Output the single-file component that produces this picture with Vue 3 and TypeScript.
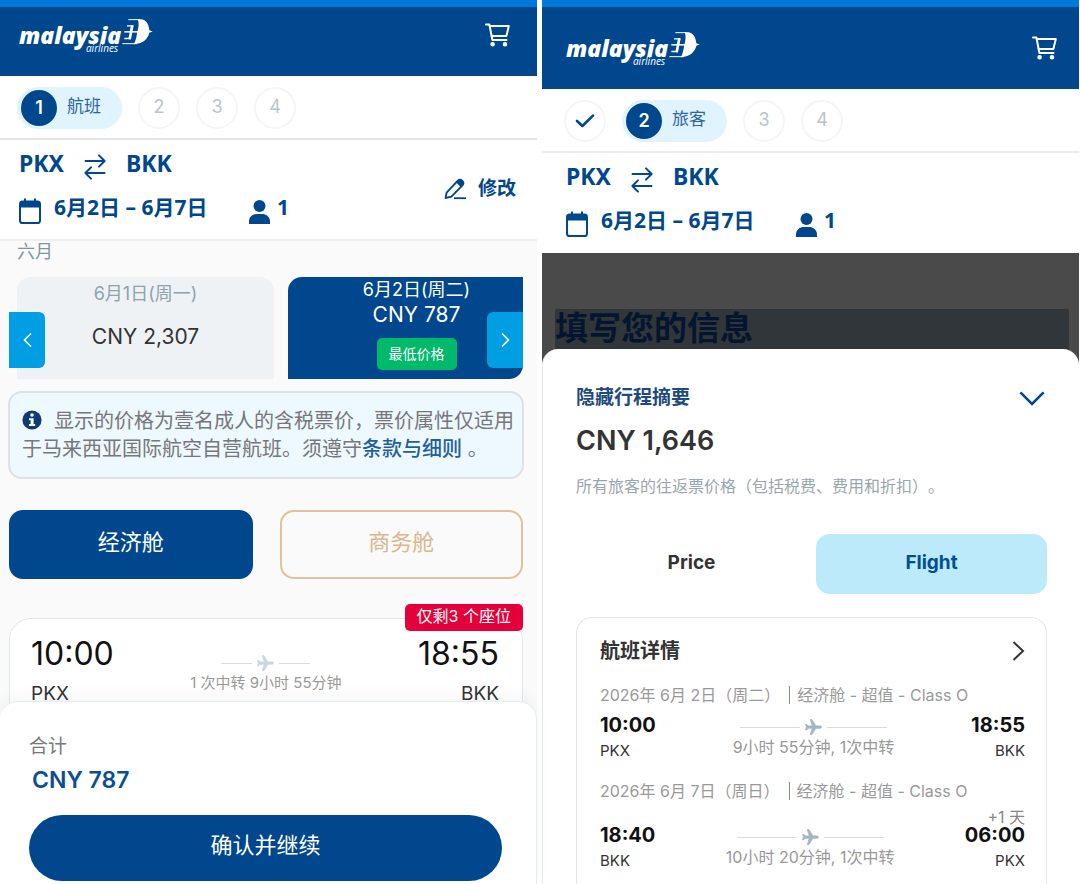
<script setup lang="ts">
import { ref } from 'vue'

interface Step {
  label: string
  state: 'done' | 'current' | 'todo'
  title?: string
}

interface Screen {
  id: 'select' | 'passenger'
  steps: Step[]
}

interface Leg {
  date: string
  cabin: string
  depart: string
  from: string
  arrive: string
  to: string
  duration: string
  extra?: string
}

const screens: Screen[] = [
  {
    id: 'select',
    steps: [
      { label: '1', state: 'current', title: '航班' },
      { label: '2', state: 'todo' },
      { label: '3', state: 'todo' },
      { label: '4', state: 'todo' },
    ],
  },
  {
    id: 'passenger',
    steps: [
      { label: '1', state: 'done' },
      { label: '2', state: 'current', title: '旅客' },
      { label: '3', state: 'todo' },
      { label: '4', state: 'todo' },
    ],
  },
]

const legs: Leg[] = [
  {
    date: '2026年 6月 2日（周二）',
    cabin: '经济舱 - 超值 - Class O',
    depart: '10:00',
    from: 'PKX',
    arrive: '18:55',
    to: 'BKK',
    duration: '9小时 55分钟, 1次中转',
  },
  {
    date: '2026年 6月 7日（周日）',
    cabin: '经济舱 - 超值 - Class O',
    depart: '18:40',
    from: 'BKK',
    arrive: '06:00',
    to: 'PKX',
    duration: '10小时 20分钟, 1次中转',
    extra: '+1 天',
  },
]

const cabin = ref<'economy' | 'business'>('economy')
const tab = ref<'price' | 'flight'>('flight')
</script>

<template>
  <main class="page">
    <section v-for="s in screens" :key="s.id" class="screen" :class="s.id">
      <header class="top">
        <a class="logo" href="#" aria-label="malaysia airlines">
          <span class="words">
            <span class="word-main">malaysia</span>
            <span class="word-sub">airlines</span>
          </span>
          <svg class="kite" viewBox="24 16 96 80" aria-hidden="true">
            <path d="M74 19 H86 C100 21 107 34 109 52 L119 56 L109 60 C104 80 88 94 62 94 C68 86 70 74 72 62 C75 48 80 32 74 19 Z" fill="#fff" />
            <g fill="none" stroke="#fff">
              <path d="M46 20.500 H80" stroke-width="3" />
              <path d="M28 92.500 H72" stroke-width="3" />
              <path d="M58 37 L50 79" stroke-width="8" />
              <path d="M42 39 H61 M34 77 H53" stroke-width="4" />
              <path d="M34 57 H76" stroke-width="4.500" />
            </g>
          </svg>
        </a>
        <button class="icon-btn" type="button" aria-label="购物车">
          <svg viewBox="0 0 25 24" width="25" height="24" fill="none" stroke="#fff" stroke-width="2" stroke-linejoin="round" stroke-linecap="round">
            <path d="M1 1.500 H4.400 L7.400 17 H21.500" />
            <path d="M4.800 3 H23.800 L21.400 13 H6.600" />
            <circle cx="7.600" cy="21.200" r="1.300" fill="#fff" />
            <circle cx="20" cy="21.200" r="1.300" fill="#fff" />
          </svg>
        </button>
      </header>

      <ol class="steps">
        <li v-for="st in s.steps" :key="st.label" class="step" :class="st.state">
          <svg v-if="st.state === 'done'" viewBox="0 0 20 16" width="20" height="16" fill="none" stroke="#00478d" stroke-width="2.6" stroke-linecap="round" stroke-linejoin="round">
            <path d="M2 8 L7.4 13 L18 2.6" />
          </svg>
          <template v-else-if="st.state === 'current'">
            <span class="dot">{{ st.label }}</span>
            <span class="step-title">{{ st.title }}</span>
          </template>
          <span v-else>{{ st.label }}</span>
        </li>
      </ol>

      <div class="trip">
        <div class="trip-info">
          <div class="route-line">
            <span>PKX</span>
            <svg viewBox="0 0 22 26" width="22" height="26" fill="none" stroke="#00478d" stroke-width="2" stroke-linecap="round" stroke-linejoin="round">
              <path d="M1.5 7 H20.5 M15 1.4 L20.6 7 L15 12.6" />
              <path d="M20.5 19 H1.5 M7 13.4 L1.4 19 L7 24.6" />
            </svg>
            <span>BKK</span>
          </div>
          <div class="date-line">
            <svg viewBox="0 0 22 26" width="22" height="26" fill="none">
              <rect x="1" y="3.6" width="20" height="21.4" rx="2.6" stroke="#00478d" stroke-width="2" />
              <path d="M1 9.6 V5.6 Q1 3.6 3 3.6 H19 Q21 3.6 21 5.6 V9.6 Z" fill="#00478d" />
              <path d="M6 0.6 V5 M16 0.6 V5" stroke="#00478d" stroke-width="2" />
            </svg>
            <span class="dates">6月2日 – 6月7日</span>
            <svg viewBox="0 0 21 24" width="21" height="24" fill="#00478d">
              <circle cx="10.5" cy="6" r="6" />
              <path d="M0 24 V21.6 C0 16.6 4 14 8 14 H13 C17 14 21 16.6 21 21.6 V24 Z" />
            </svg>
            <span class="pax">1</span>
          </div>
        </div>
        <button v-if="s.id === 'select'" class="edit" type="button">
          <svg viewBox="0 0 23 22" width="23" height="22">
            <path d="M1.6 20 L2.6 14.6 L13.6 2.9 Q16 0.8 18.4 2.9 Q20.4 5 18.4 7.4 L7.4 18.6 Z" fill="none" stroke="#00478d" stroke-width="1.9" stroke-linejoin="round" />
            <path d="M12 4.6 L13.6 2.9 Q16 0.8 18.4 2.9 Q20.4 5 18.4 7.4 L16.8 9 Z" fill="#00478d" />
            <path d="M10 20.2 H22" stroke="#00478d" stroke-width="1.8" />
          </svg>
          <span>修改</span>
        </button>
      </div>

      <template v-if="s.id === 'select'">
        <div class="body">
          <div class="month">六月</div>
          <div class="carousel">
            <div class="viewport">
              <div class="day">
                <span class="day-date">6月1日(周一)</span>
                <span class="day-price">CNY 2,307</span>
              </div>
              <div class="day active">
                <span class="day-date">6月2日(周二)</span>
                <span class="day-price">CNY 787</span>
                <span class="lowest">最低价格</span>
              </div>
            </div>
            <button class="nav prev" type="button" aria-label="上一个">
              <svg viewBox="0 0 9 16" width="9" height="16" fill="none" stroke="#fff" stroke-width="1.6"><path d="M8 1.5 L1.5 8 L8 14.5" /></svg>
            </button>
            <button class="nav next" type="button" aria-label="下一个">
              <svg viewBox="0 0 9 16" width="9" height="16" fill="none" stroke="#fff" stroke-width="1.6"><path d="M1 1.5 L7.5 8 L1 14.5" /></svg>
            </button>
          </div>

          <p class="notice">
            <svg class="info" viewBox="0 0 20 20" width="20" height="20">
              <circle cx="10" cy="10" r="9.6" fill="#0f3a72" />
              <circle cx="10" cy="5" r="1.8" fill="#fff" />
              <path d="M7 8.2 H11.6 V14 H13.2 V16 H7 V14 H8.6 V10.2 H7 Z" fill="#fff" />
            </svg>显示的价格为壹名成人的含税票价，票价属性仅适用于马来西亚国际航空自营航班。须遵守<a href="#">条款与细则</a> 。
          </p>

          <div class="cabins">
            <button type="button" :class="{ on: cabin === 'economy' }" @click="cabin = 'economy'">经济舱</button>
            <button type="button" :class="{ on: cabin === 'business' }" @click="cabin = 'business'">商务舱</button>
          </div>

          <article class="flight">
            <span class="seats">仅剩3 个座位</span>
            <div class="end">
              <span class="big">10:00</span>
              <span class="port">PKX</span>
            </div>
            <div class="via">
              <div class="track short">
                <i></i>
                <svg viewBox="0 0 24 24" width="19" height="19" fill="#c9d6de" stroke="#c9d6de" stroke-width="1"><path transform="rotate(90 12 12)" d="M21 16v-2l-8-5V3.5c0-.83-.67-1.5-1.5-1.5S10 2.67 10 3.500V9l-8 5v2l8-2.500V19l-2 1.500V22l3.500-1 3.500 1v-1.500L13 19v-5.500l8 2.500z" /></svg>
                <i></i>
              </div>
              <span>1 次中转 9小时 55分钟</span>
            </div>
            <div class="end right">
              <span class="big">18:55</span>
              <span class="port">BKK</span>
            </div>
          </article>
        </div>

        <footer class="total">
          <span class="total-label">合计</span>
          <strong class="total-price">CNY 787</strong>
          <button class="confirm" type="button">确认并继续</button>
        </footer>
      </template>

      <template v-else>
        <div class="shade">
          <h1>填写您的信息</h1>
        </div>
        <div class="summary">
          <button class="toggle" type="button">
            <span>隐藏行程摘要</span>
            <svg viewBox="0 0 26 15" width="26" height="15" fill="none" stroke="#00478d" stroke-width="2.6"><path d="M1.400 1.400 L13 13 L24.600 1.400" /></svg>
          </button>
          <strong class="amount">CNY 1,646</strong>
          <p class="fine">所有旅客的往返票价格（包括税费、费用和折扣）。</p>
          <div class="tabs" role="tablist">
            <button type="button" role="tab" :class="{ on: tab === 'price' }" @click="tab = 'price'">Price</button>
            <button type="button" role="tab" :class="{ on: tab === 'flight' }" @click="tab = 'flight'">Flight</button>
          </div>
          <section class="details">
            <button class="details-head" type="button">
              <span>航班详情</span>
              <svg viewBox="0 0 13 20" width="13" height="20" fill="none" stroke="#333" stroke-width="2"><path d="M1.500 1 L11 10 L1.500 19" /></svg>
            </button>
            <div v-for="leg in legs" :key="leg.date" class="leg">
              <div class="leg-date"><span>{{ leg.date }}</span><span class="bar"></span><span>{{ leg.cabin }}</span></div>
              <div class="leg-row">
                <div class="leg-end">
                  <b>{{ leg.depart }}</b>
                  <span>{{ leg.from }}</span>
                </div>
                <div class="via">
                  <div class="track">
                    <i></i>
                    <svg viewBox="0 0 24 24" width="19" height="19" fill="#a3b5c0" stroke="#a3b5c0" stroke-width="1"><path transform="rotate(90 12 12)" d="M21 16v-2l-8-5V3.5c0-.83-.67-1.5-1.5-1.5S10 2.67 10 3.500V9l-8 5v2l8-2.500V19l-2 1.500V22l3.500-1 3.500 1v-1.500L13 19v-5.500l8 2.500z" /></svg>
                    <i></i>
                  </div>
                  <span>{{ leg.duration }}</span>
                </div>
                <div class="leg-end right">
                  <small v-if="leg.extra">{{ leg.extra }}</small>
                  <b>{{ leg.arrive }}</b>
                  <span>{{ leg.to }}</span>
                </div>
              </div>
            </div>
          </section>
        </div>
      </template>
    </section>
  </main>
</template>

<style>
body {
  margin: 0;
  background: #fff;
}
</style>

<style scoped>
* {
  box-sizing: border-box;
}
.page {
  --navy: #00478d;
  display: grid;
  grid-template-columns: 1fr 1fr;
  gap: 5px;
  min-height: 100vh;
  padding-right: 1px;
  font-family: Inter, "Noto Sans CJK SC", sans-serif;
  color: #333;
}
button {
  margin: 0;
  padding: 0;
  border: 0;
  background: none;
  font: inherit;
  color: inherit;
  cursor: pointer;
}
svg {
  display: block;
  flex: none;
}
.screen {
  --pad: 19px;
  display: flex;
  flex-direction: column;
  min-width: 0;
  border-top: 7px solid #0078dc;
  background: #fff;
}
.passenger {
  --pad: 24px;
}
.top {
  display: flex;
  align-items: flex-start;
  justify-content: space-between;
  padding: 11px 27px 23px var(--pad);
  background: var(--navy);
}
.passenger .top {
  padding: 24px 22px 23px var(--pad);
}
.icon-btn {
  margin-top: 5px;
}
.logo {
  display: flex;
  align-items: flex-start;
  height: 35px;
  color: #fff;
  text-decoration: none;
  font-family: "Open Sans", "Noto Sans", sans-serif;
  font-style: italic;
}
.words {
  display: flex;
  flex-direction: column;
  align-items: flex-end;
}
.word-main {
  font-size: 23px;
  font-weight: 800;
  line-height: 34px;
  height: 25px;
}
.word-sub {
  font-size: 10px;
  line-height: 10px;
  padding-right: 3px;
}
.kite {
  width: 32px;
  height: 27px;
}
.steps {
  display: flex;
  align-items: center;
  gap: 16px;
  margin: 0;
  padding: 11px 17px 9px;
  border-bottom: 2px solid #e2e6e9;
  list-style: none;
  font-size: 18px;
}
.passenger .steps {
  padding-left: 22px;
  border-color: #ececec;
}
.step {
  display: flex;
  align-items: center;
  justify-content: center;
  width: 42px;
  height: 42px;
  border: 2px solid #f3f5f6;
  border-radius: 50%;
  color: #b7c4cc;
  line-height: 24px;
  padding-bottom: 3px;
}
.step.done {
  padding-bottom: 0;
}
.step.current {
  justify-content: flex-start;
  gap: 10px;
  width: 105px;
  border: 0;
  border-radius: 21px;
  padding: 0 0 0 4px;
  background: #dff4fe;
}
.dot {
  display: flex;
  align-items: center;
  justify-content: center;
  width: 36px;
  height: 36px;
  border-radius: 50%;
  background: var(--navy);
  color: #fff;
  font-weight: 600;
}
.step-title {
  color: #2f659d;
  font-size: 17px;
  padding-bottom: 5px;
}
.trip {
  display: flex;
  align-items: center;
  justify-content: space-between;
  padding: 10px 21px 15px var(--pad);
  border-bottom: 2px solid #efefef;
  color: var(--navy);
  font-family: "Noto Sans", "Noto Sans CJK SC", sans-serif;
  font-weight: 700;
}
.passenger .trip {
  padding-bottom: 16px;
  border-bottom: 0;
}
.trip-info {
  display: flex;
  flex-direction: column;
  gap: 12px;
}
.route-line {
  display: flex;
  align-items: flex-start;
  gap: 20px;
  height: 30px;
  font-size: 23px;
  line-height: 26px;
}
.route-line svg {
  align-self: flex-end;
}
.date-line {
  display: flex;
  align-items: flex-end;
  height: 32px;
  font-size: 21px;
}
.date-line span {
  align-self: flex-start;
  line-height: 30px;
}
.dates {
  width: 154px;
  margin: 0 41px 0 13px;
  white-space: nowrap;
}
.pax {
  margin-left: 7px;
}
.edit {
  display: flex;
  align-items: center;
  gap: 11px;
  font-size: 19px;
  font-weight: 700;
}
.edit svg {
  margin-top: 4px;
}
.body {
  padding: 0 14px 0 9px;
  background: #fafafa;
}
.month {
  padding-left: 8px;
  color: #8296a1;
  font-size: 18px;
  line-height: 22px;
}
.carousel {
  position: relative;
  margin-top: 14px;
  padding-left: 8px;
}
.viewport {
  display: flex;
  gap: 14px;
  height: 102px;
  overflow: hidden;
  border-bottom-right-radius: 14px;
}
.day {
  flex: 0 0 calc(50% + 4px);
  display: flex;
  flex-direction: column;
  align-items: center;
  gap: 16px;
  padding-top: 3px;
  border-radius: 14px 14px 0 0;
  background: #eef2f5;
  font-size: 21px;
}
.day-date {
  color: #8fa2ad;
  font-size: 18px;
  line-height: 28px;
}
.day-price {
  line-height: 26px;
}
.day.active {
  gap: 0;
  padding-top: 1px;
  border-radius: 14px 0 0 0;
  background: var(--navy);
  color: #fff;
}
.day.active .day-date {
  color: #fff;
  line-height: 24px;
}
.lowest {
  margin-top: 10px;
  padding: 0 12px;
  border-radius: 5px;
  background: #00b96b;
  font-size: 14px;
  line-height: 32px;
}
.nav {
  position: absolute;
  top: 35px;
  display: flex;
  align-items: center;
  justify-content: center;
  width: 36px;
  height: 56px;
  background: #009fe3;
}
.prev {
  left: 0;
  border-radius: 0 6px 6px 0;
}
.next {
  right: 0;
  border-radius: 6px 0 0 6px;
}
.notice {
  margin: 12px -1px 0;
  padding: 14px 3px 14px 12px;
  border: 2px solid #dee1e4;
  border-radius: 14px;
  background: #edf8ff;
  color: #777;
  font-size: 20px;
  line-height: 28px;
}
.notice a {
  color: #1f5f9f;
  font-weight: 500;
  text-decoration: none;
}
.info {
  display: inline-block;
  margin-right: 12px;
  vertical-align: -2px;
}
.cabins {
  display: grid;
  grid-template-columns: 1fr 1fr;
  gap: 27px;
  margin-top: 31px;
}
.cabins button {
  height: 69px;
  padding-bottom: 10px;
  border: 2px solid #e2c29c;
  border-radius: 14px;
  color: #dbb68c;
  font-size: 22px;
}
.cabins .on {
  border-color: var(--navy);
  background: var(--navy);
  color: #fff;
}
.flight {
  position: relative;
  display: flex;
  justify-content: space-between;
  margin-top: 39px;
  padding: 17px 23px 18px 21px;
  border: 1px solid #dfe8ed;
  border-radius: 22px;
  background: #fff;
}
.seats {
  position: absolute;
  top: -15px;
  right: -1px;
  padding: 0 12px 3px;
  border-radius: 5px;
  background: #e4003a;
  color: #fff;
  font-size: 16px;
  line-height: 24px;
}
.end {
  display: flex;
  flex-direction: column;
  gap: 10px;
}
.right {
  align-items: flex-end;
}
.big {
  color: #111;
  font-size: 32px;
  line-height: 36px;
}
.port {
  font-size: 19px;
  line-height: 24px;
}
.via {
  display: flex;
  flex-direction: column;
  align-items: center;
  color: #999;
  font-size: 16px;
  line-height: 20px;
}
.flight .via {
  margin-top: 18px;
  font-size: 15px;
}
.track {
  display: flex;
  align-items: center;
  gap: 4px;
}
.track i {
  width: 60px;
  height: 1px;
  background: #dcdcdc;
}
.track.short i {
  width: 31px;
}
.total {
  position: relative;
  flex: 1;
  display: flex;
  flex-direction: column;
  margin-top: -24px;
  padding: 32px 34px 2px 29px;
  border: 1px solid #e3ecef;
  border-width: 1px 1px 0 0;
  border-radius: 18px 18px 0 0;
  background: #fff;
  box-shadow: 0 -6px 14px rgba(0, 0, 0, 0.04);
}
.total-label {
  color: #777;
  font-size: 19px;
  line-height: 26px;
}
.total-price {
  margin-top: 5px;
  padding-left: 3px;
  color: #0a4f93;
  font-size: 23px;
  font-weight: 600;
  line-height: 30px;
}
.confirm {
  height: 66px;
  margin-top: 20px;
  padding-bottom: 10px;
  border-radius: 33px;
  background: var(--navy);
  color: #fff;
  font-size: 22px;
}
.shade {
  padding: 56px 10px 0 13px;
  background: #4a4a4a;
}
.shade h1 {
  height: 56px;
  margin: 0;
  background: #303639;
  color: #06152f;
  font-size: 33px;
  font-weight: 700;
  line-height: 38px;
}
.summary {
  flex: 1;
  display: flex;
  flex-direction: column;
  margin-top: -16px;
  padding: 35px 32px 0 33px;
  border: solid #e8e8e8;
  border-width: 0 0 0 1px;
  border-radius: 16px 16px 0 0;
  background: #fff;
}
.toggle {
  display: flex;
  align-items: center;
  justify-content: space-between;
  padding-right: 2px;
  color: #1d4a80;
  font-size: 19px;
  font-weight: 700;
  line-height: 28px;
}
.amount {
  margin-top: 12px;
  font-size: 27px;
  font-weight: 600;
  line-height: 34px;
}
.fine {
  margin: 16px 0 36px;
  color: #9aa6ad;
  font-size: 16px;
  line-height: 24px;
  text-spacing-trim: space-all;
}
.tabs {
  display: grid;
  grid-template-columns: 1fr 1fr;
  gap: 9px;
}
.tabs button {
  height: 60px;
  padding-bottom: 4px;
  border-radius: 14px;
  font-size: 19px;
  font-weight: 700;
}
.tabs .on {
  background: #bceafb;
  color: #004e93;
}
.details {
  flex: 1;
  margin-top: 23px;
  padding: 19px 21px 4px 23px;
  border: 1px solid #e6e6e6;
  border-bottom: 0;
  border-radius: 16px 16px 0 0;
}
.details-head {
  display: flex;
  align-items: center;
  justify-content: space-between;
  width: 100%;
  font-size: 20px;
  font-weight: 700;
  line-height: 28px;
}
.leg {
  margin-top: 18px;
}
.leg-date {
  display: flex;
  align-items: center;
  color: #999;
  font-size: 16px;
  line-height: 24px;
  white-space: nowrap;
}
.bar {
  width: 1px;
  height: 18px;
  margin: 0 7px 0 9px;
  background: #888;
}
.leg-row {
  display: flex;
  align-items: flex-end;
  justify-content: space-between;
  margin-top: 5px;
}
.leg-row .via {
  margin-bottom: 4px;
}
.leg-end {
  display: flex;
  flex-direction: column;
  font-size: 15px;
  line-height: 20px;
}
.leg-end b {
  margin-bottom: 3px;
  color: #111;
  font-size: 20px;
  line-height: 26px;
}
.leg-end small {
  margin-bottom: -4px;
  color: #888;
  font-size: 16px;
  line-height: 18px;
}
</style>
